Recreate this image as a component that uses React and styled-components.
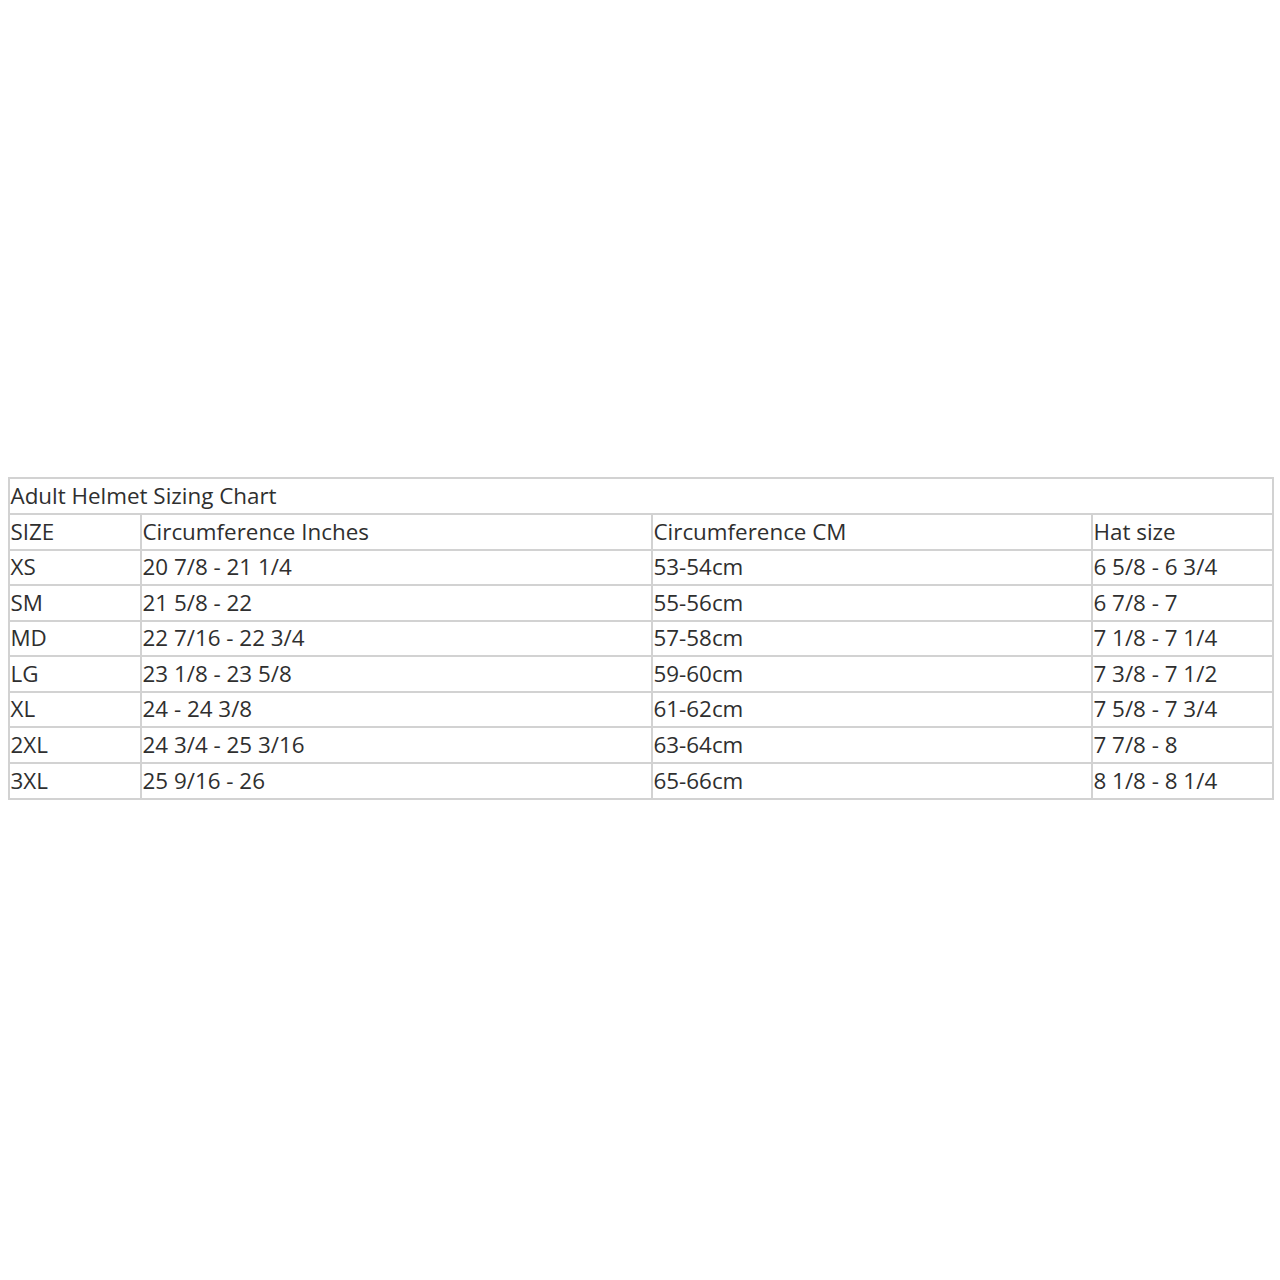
import React from "react";
import styled, { createGlobalStyle } from "styled-components";

const GlobalStyle = createGlobalStyle`
  html, body {
    margin: 0;
    padding: 0;
    background: #ffffff;
  }
`;

const Page = styled.div`
  min-height: 1277px;
  padding-left: 2px;
  display: flex;
  align-items: center;
  justify-content: center;
  font-family: "Open Sans", "Liberation Sans", sans-serif;
  color: #2f2f2f;
`;

const ChartTable = styled.table`
  width: 1263px;
  table-layout: fixed;
  border-collapse: collapse;
  border: 2px solid #d2d2d2;
  font-size: 22.4px;
`;

const Cell = styled.td`
  height: 33.6px;
  padding: 0 2px 0 0;
  border: 2px solid #d2d2d2;
  text-align: left;
  vertical-align: middle;
  white-space: nowrap;
  line-height: 1;
  font-weight: 400;
`;

const sizes = [
  ["XS", "20 7/8 - 21 1/4", "53-54cm", "6 5/8 - 6 3/4"],
  ["SM", "21 5/8 - 22", "55-56cm", "6 7/8 - 7"],
  ["MD", "22 7/16 - 22 3/4", "57-58cm", "7 1/8 - 7 1/4"],
  ["LG", "23 1/8 - 23 5/8", "59-60cm", "7 3/8 - 7 1/2"],
  ["XL", "24 - 24 3/8", "61-62cm", "7 5/8 - 7 3/4"],
  ["2XL", "24 3/4 - 25 3/16", "63-64cm", "7 7/8 - 8"],
  ["3XL", "25 9/16 - 26", "65-66cm", "8 1/8 - 8 1/4"],
];

const App = () => (
  <Page>
    <GlobalStyle />
    <ChartTable>
      <colgroup>
        <col style={{ width: 132 }} />
        <col style={{ width: 511 }} />
        <col style={{ width: 440 }} />
        <col style={{ width: 180 }} />
      </colgroup>
      <tbody>
        <tr>
          <Cell colSpan={4}>Adult Helmet Sizing Chart</Cell>
        </tr>
        <tr>
          <Cell>SIZE</Cell>
          <Cell>Circumference Inches</Cell>
          <Cell>Circumference CM</Cell>
          <Cell>Hat size</Cell>
        </tr>
        {sizes.map((row) => (
          <tr key={row[0]}>
            {row.map((v, i) => (
              <Cell key={i}>{v}</Cell>
            ))}
          </tr>
        ))}
      </tbody>
    </ChartTable>
  </Page>
);

export default App;
